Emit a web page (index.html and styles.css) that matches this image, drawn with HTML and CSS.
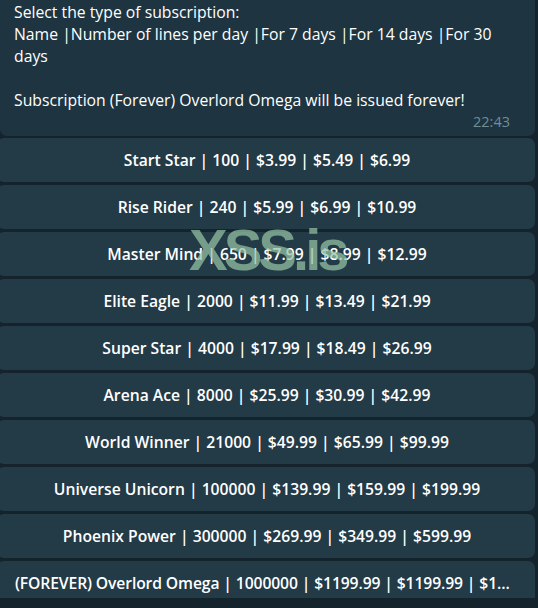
FILE: index.html
```html
<!DOCTYPE html>
<html>
<head>
<meta charset="utf-8">
<link rel="stylesheet" href="styles.css">
</head>
<body>
<div class="chat">
  <div class="bubble">
    <div class="msg">Select the type of subscription:<br>Name |Number of lines per day |For 7 days |For 14 days |For 30 days<br><br>Subscription (Forever) Overlord Omega will be issued forever!</div>
    <div class="time">22:43</div>
  </div>
  <div class="keyboard">
    <div class="btn">Start Star | 100 | $3.99 | $5.49 | $6.99</div>
    <div class="btn">Rise Rider | 240 | $5.99 | $6.99 | $10.99</div>
    <div class="btn">Master Mind | 650 | $7.99 | $8.99 | $12.99</div>
    <div class="btn">Elite Eagle | 2000 | $11.99 | $13.49 | $21.99</div>
    <div class="btn">Super Star | 4000 | $17.99 | $18.49 | $26.99</div>
    <div class="btn">Arena Ace | 8000 | $25.99 | $30.99 | $42.99</div>
    <div class="btn">World Winner | 21000 | $49.99 | $65.99 | $99.99</div>
    <div class="btn">Universe Unicorn | 100000 | $139.99 | $159.99 | $199.99</div>
    <div class="btn">Phoenix Power | 300000 | $269.99 | $349.99 | $599.99</div>
    <div class="btn btn-long">(FOREVER) Overlord Omega | 1000000 | $1199.99 | $1199.99 | $1199.99</div>
  </div>
  <div class="watermark">XSS.is</div>
</div>
</body>
</html>
```
FILE: styles.css
```css
html, body {
  margin: 0;
  padding: 0;
  background: #15232c;
  overflow: hidden;
}
.chat {
  position: relative;
  width: 538px;
  height: 608px;
  font-family: "Open Sans", "Noto Sans", sans-serif;
  color: #ffffff;
}
.bubble {
  margin: -10px 3px 0 0;
  padding: 11px 14px 3px 14px;
  background: #1e3440;
  border-radius: 0 0 7px 7px;
  font-size: 15.75px;
  line-height: 22px;
}
.msg {
  max-width: 500px;
}
.time {
  text-align: right;
  color: #6f8d9b;
  font-size: 14.5px;
  line-height: 22px;
  margin-right: 11px;
}
.keyboard {
  display: flex;
  flex-direction: column;
  gap: 3px;
  margin: 2px 3px 0 -3px;
}
.btn {
  height: 44px;
  line-height: 44px;
  background: #233a47;
  border-radius: 7px;
  text-align: center;
  font-size: 15.7px;
  font-weight: 600;
  padding: 0 16px 0 18px;
  white-space: nowrap;
  overflow: hidden;
  text-overflow: ellipsis;
}
.btn-long {
  padding-right: 20px;
  letter-spacing: -0.12px;
}
.watermark {
  position: absolute;
  left: 189px;
  top: 230px;
  font-family: "Liberation Sans", Arial, sans-serif;
  font-weight: 700;
  font-size: 58px;
  line-height: 60px;
  letter-spacing: -4px;
  color: rgba(150, 195, 165, 0.72);
  pointer-events: none;
}
```
